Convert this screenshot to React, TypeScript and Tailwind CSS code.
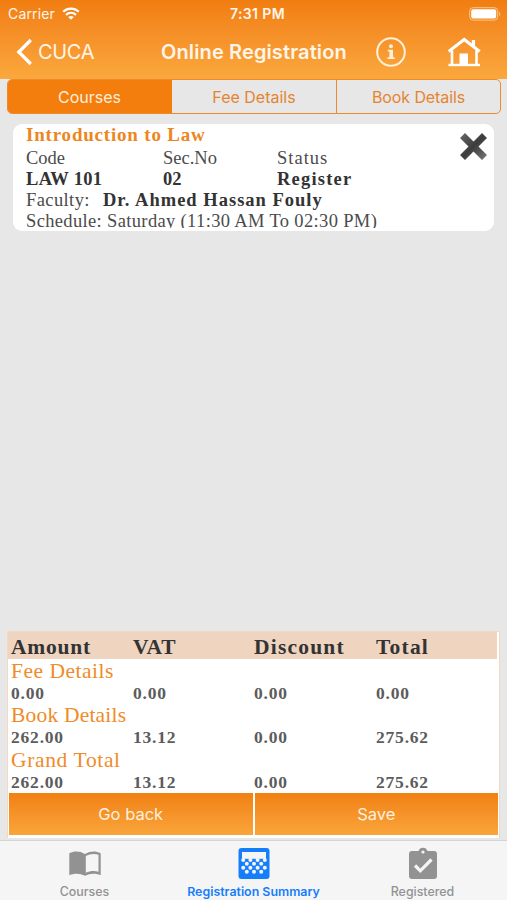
import type { ReactNode } from "react";

const sans = "font-['Inter','Liberation_Sans',sans-serif]";
const serif = "font-['Liberation_Serif',serif]";

function StatusBar() {
  return (
    <div className="flex h-[27px] items-center justify-between pl-[8px] pr-[6px]">
      <div className="flex w-[160px] items-center gap-[7px] text-[14px] tracking-[0.15px]">
        <span>Carrier</span>
        <svg width="18" height="14" viewBox="0 0 18 14" fill="none" stroke="white" strokeWidth="2.2">
          <path d="M1.2 4.7C5.6.6 12.4.6 16.8 4.7M4 7.9c2.9-2.6 7.1-2.6 10 0" />
          <path d="M9 12.8 6.2 10c1.7-1.5 3.9-1.5 5.6 0Z" fill="white" stroke="none" />
        </svg>
      </div>
      <span className="-mr-[6px] text-[14px] font-semibold tracking-[0.4px]">7:31 PM</span>
      <div className="flex w-[160px] justify-end">
        <svg width="32" height="14" viewBox="0 0 32 14" fill="none">
          <rect x="0.7" y="0.7" width="28" height="12.4" rx="3.4" stroke="#fbc78d" strokeWidth="1" />
          <rect x="2.2" y="2.2" width="25" height="9.4" rx="2" fill="white" />
          <path d="M30.2 4.5c1.4.7 1.4 4 0 4.8Z" fill="#fbc78d" />
        </svg>
      </div>
    </div>
  );
}

function NavBar() {
  return (
    <div className="flex h-[50px] items-center pl-[16px]">
      <svg width="17" height="28" viewBox="0 0 17 28" fill="none" stroke="white" strokeWidth="3.3">
        <path d="M14.8 2 2.8 14l12 12" />
      </svg>
      <span className="ml-[5px] w-[123px] text-[20px] tracking-[-0.35px]">CUCA</span>
      <h1 className="w-[214px] whitespace-nowrap text-[20px] font-semibold tracking-[0.12px]">Online Registration</h1>
      <svg width="32" height="32" viewBox="0 0 32 32" fill="none" className="shrink-0">
        <circle cx="16" cy="16" r="13.8" stroke="#fff0db" strokeWidth="2" />
        <circle cx="16" cy="10.3" r="2" fill="#fff0db" />
        <path d="M12.8 13.7H18v7.5h1.7V23h-7.2v-1.8h1.9v-5.7h-1.6Z" fill="#fff0db" />
      </svg>
      <svg width="34" height="32" viewBox="0 0 34 32" fill="none" className="ml-[40px] shrink-0">
        <path d="m1.7 15.5 15.5-12 15.5 12" stroke="white" strokeWidth="3" />
        <path d="M24.8 4h3.3v7l-3.3-2.5ZM12.5 17.5h8.5V29h-8.5Z" fill="white" />
        <path d="M5 14.5V29m24.5-14.5V29" stroke="white" strokeWidth="2.6" />
        <path d="M1.5 29H33" stroke="white" strokeWidth="2.4" />
      </svg>
    </div>
  );
}

function Segments() {
  return (
    <div className="mr-[6px] ml-[7px] flex h-[35px] shrink-0 overflow-hidden rounded-[5px] border border-[#ed8a2c] text-[16px] text-[#e58430]">
      <button className="w-[164px] bg-[#f37e0e] pr-px text-[#ffeddb]">Courses</button>
      <button className="w-[165px] border-r border-[#ed8a2c]">Fee Details</button>
      <button className="flex-1 tracking-[-0.1px]">Book Details</button>
    </div>
  );
}

function CourseCard() {
  return (
    <section className={`${serif} relative mx-[13px] mt-[10px] h-[107px] shrink-0 overflow-hidden rounded-[9px] bg-white pl-[13px] text-[18.5px] text-[#4b4b4b]`}>
      <h2 className="h-[24px] text-[19px] leading-[22px] font-bold tracking-[0.8px] text-[#ed861e]">Introduction to Law</h2>
      <div className="grid grid-cols-[137px_114px_1fr] leading-[21px]">
        <span>Code</span><span>Sec.No</span><span className="tracking-[1px]">Status</span>
        <b className="tracking-[0.3px] text-[#333]">LAW 101</b><b className="text-[#333]">02</b><b className="tracking-[1.2px] text-[#333]">Register</b>
      </div>
      <p className="flex leading-[21px]"><span className="w-[77px] tracking-[0.4px]">Faculty:</span><b className="tracking-[1px] text-[#333]">Dr. Ahmed Hassan Fouly</b></p>
      <p className="h-[17px] overflow-hidden whitespace-nowrap leading-[20px] tracking-[0.35px]">Schedule: Saturday (11:30 AM To 02:30 PM)</p>
      <button aria-label="Remove course" className="absolute right-[6px] top-[8px]">
        <svg width="29" height="29" viewBox="0 0 29 29">
          <defs><linearGradient id="cross" x1="0" y1="0" x2="1" y2="1"><stop stopColor="#6a6a6a" /><stop offset=".5" stopColor="#3c3c3c" /><stop offset="1" stopColor="#7c7c7c" /></linearGradient></defs>
          <path d="m6 1 8.5 8.5L23 1l5 5-8.5 8.5L28 23l-5 5-8.5-8.5L6 28l-5-5 8.5-8.5L1 6Z" fill="url(#cross)" />
        </svg>
      </button>
    </section>
  );
}

const groups = [
  { label: "Fee Details", tracking: "tracking-[0.5px]", values: ["0.00", "0.00", "0.00", "0.00"] },
  { label: "Book Details", tracking: "tracking-[0.2px]", values: ["262.00", "13.12", "0.00", "275.62"] },
  { label: "Grand Total", tracking: "tracking-[0.65px]", values: ["262.00", "13.12", "0.00", "275.62"] },
];

function Summary() {
  return (
    <section className={`${serif} mx-[7px] mt-auto h-[207px] shrink-0 border border-b-0 border-[#f3d7c0] bg-white`}>
      <div className="mr-[2px] grid h-[27px] grid-cols-[122px_121px_122px_1fr] bg-[#efd4c0] pl-[3px] text-[21.5px] leading-[30px] font-bold tracking-[0.8px] text-[#333]">
        <span>Amount</span><span>VAT</span><span className="tracking-[1.2px]">Discount</span><span className="tracking-[1.2px]">Total</span>
      </div>
      {groups.map((group) => (
        <div key={group.label} className="h-[44.4px] pl-[3px]">
          <h3 className={`h-[25px] text-[21.5px] leading-[25px] text-[#ef8b28] ${group.tracking}`}>{group.label}</h3>
          <div className="grid grid-cols-[122px_121px_122px_1fr] text-[17.5px] leading-[19px] font-bold tracking-[0.8px] text-[#5c5c5c]">
            {group.values.map((value, index) => <span key={index}>{value}</span>)}
          </div>
        </div>
      ))}
      <div className={`${sans} mt-[0.8px] flex h-[44px] gap-[2px] bg-white px-px pb-[2px] text-[16.5px] text-[#fff0df]`}>
        <button className="flex-1 bg-linear-to-b from-[#f18010] to-[#f9a53a]">Go back</button>
        <button className="flex-1 bg-linear-to-b from-[#f18010] to-[#f9a53a]">Save</button>
      </div>
    </section>
  );
}

function Tab({ label, active, children }: { label: string; active?: boolean; children: ReactNode }) {
  return (
    <button className={`flex flex-1 flex-col items-center pt-[6px] ${active ? "font-semibold text-[#157efb]" : "font-medium text-[#929292]"}`}>
      <svg width="36" height="34" viewBox="0 0 36 34" fill="none">{children}</svg>
      <span className="mt-[3px] text-[12.4px] leading-[15px]">{label}</span>
    </button>
  );
}

const dots = [
  [7.2, 13], [14.4, 13], [21.6, 13], [28.8, 13],
  [10.8, 16.8], [18, 16.8], [25.2, 16.8],
  [7.2, 20.7], [14.4, 20.7], [21.6, 20.7], [28.8, 20.7],
  [10.8, 24.8], [18, 24.8], [25.2, 24.8],
];

export default function App() {
  return (
    <main className={`${sans} flex h-[900px] w-[507px] flex-col overflow-hidden bg-[#e7e7e8]`}>
      <header className="h-[79px] shrink-0 bg-linear-to-b from-[#f17d10] to-[#faa83d] text-[#fff5e8]"><StatusBar /><NavBar /></header>
      <Segments />
      <CourseCard />
      <Summary />
      <nav className="mt-[2px] flex h-[60px] shrink-0 border-t border-[#d5d5d6] bg-[#f5f5f6]">
        <Tab label="Courses">
          <path d="M2.3 6.3c5-2.6 10.700-2.300 15.700.7 5-3 10.700-3.300 15.700-.7v22c-5-2.200-10.700-2-15.700.5-5-2.500-10.700-2.700-15.700-.5Z" fill="#929292" />
          <path d="M18.800 9c4-2.200 8.500-2.700 12.700-1.200v16.900c-4.200-1.300-8.700-.8-12.700 1.100Z" fill="#f5f5f6" />
        </Tab>
        <Tab label="Registration Summary" active>
          <rect x="2.5" y="1" width="31" height="31" rx="3" fill="#157efb" />
          <path d="M6 5h24v6.800H6Z" fill="#f5f5f6" />
          {dots.map(([cx, cy]) => <circle key={`${cx}-${cy}`} cx={cx} cy={cy} r="2" fill="#f5f5f6" />)}
        </Tab>
        <Tab label="Registered">
          <path d="M7 4h6.500a4.700 4.700 0 0 1 9 0H29q3 0 3 3v22q0 3-3 3H7q-3 0-3-3V7q0-3 3-3Z" fill="#929292" />
          <circle cx="18" cy="5" r="1.6" fill="#f5f5f6" />
          <path d="m10 18.500 5.300 5.300L26.500 12.500" stroke="#f5f5f6" strokeWidth="3.2" />
        </Tab>
      </nav>
    </main>
  );
}
